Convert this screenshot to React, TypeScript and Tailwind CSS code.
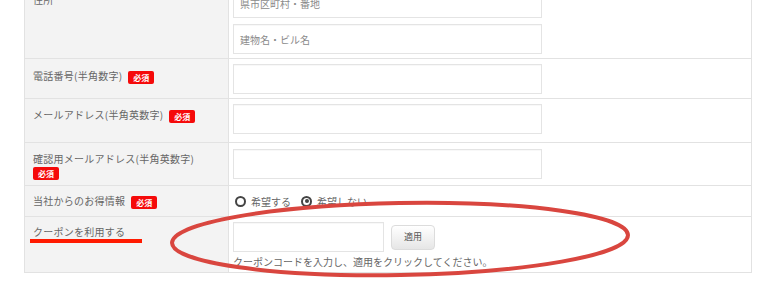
import React from 'react';

/**
 * Order form fragment (address / contact / coupon rows)
 * with a hand-drawn red annotation over the coupon row.
 */

const FONT = { fontFamily: '"Noto Sans CJK JP", "Noto Sans", sans-serif' };

function Required() {
  return (
    <span className="ml-[6px] inline-block rounded-[2px] bg-[#f50a0a] px-[5px] align-middle text-[8px] font-bold leading-[13px] tracking-normal text-white">
      必須
    </span>
  );
}

function TextInput({ placeholder, className = 'w-[309px]' }: { placeholder?: string; className?: string }) {
  return (
    <div
      className={`flex h-[30px] items-center border border-[#e4e4e4] bg-white px-[6px] text-[10px] text-[#8a8a8a] shadow-[inset_0_1px_1px_rgba(0,0,0,0.03)] ${className}`}
    >
      {placeholder}
    </div>
  );
}

function Radio({ checked, label }: { checked?: boolean; label: string }) {
  return (
    <label className="flex items-center gap-[5px] text-[10px] text-[#666]">
      <span className="flex h-[11px] w-[11px] items-center justify-center rounded-full border-2 border-[#444] bg-white">
        {checked && <span className="h-[4px] w-[4px] rounded-full bg-[#444]" />}
      </span>
      {label}
    </label>
  );
}

interface RowProps {
  label: React.ReactNode;
  height: string;
  labelPad?: string;
  valuePad?: string;
  children: React.ReactNode;
}

function Row({ label, height, labelPad = 'pt-[10px]', valuePad = 'pt-[5px]', children }: RowProps) {
  return (
    <div className={`grid grid-cols-[204px_1fr] border-b border-[#e2e2e2] ${height}`}>
      <div
        className={`border-r border-[#e2e2e2] bg-[#f3f3f3] px-[8px] text-[10px] leading-[14px] tracking-[0.25px] text-[#666] ${labelPad}`}
      >
        {label}
      </div>
      <div className={`bg-white pl-[4px] ${valuePad}`}>{children}</div>
    </div>
  );
}

export default function App() {
  return (
    <div className="relative h-[288px] w-[768px] overflow-hidden bg-white" style={FONT}>
      <div className="-mt-[17px] ml-[24px] w-[728px] border-x border-[#e2e2e2]">
        <Row label="住所" height="h-[76px]">
          <div className="flex flex-col gap-[6px]">
            <TextInput placeholder="県市区町村・番地" />
            <TextInput placeholder="建物名・ビル名" />
          </div>
        </Row>

        <Row label={<>電話番号(半角数字)<Required /></>} height="h-[40px]">
          <TextInput />
        </Row>

        <Row label={<>メールアドレス(半角英数字)<Required /></>} height="h-[44px]" labelPad="pt-[9px]">
          <TextInput />
        </Row>

        <Row
          label={
            <>
              <span className="block">確認用メールアドレス(半角英数字)</span>
              <span className="-ml-[6px] block leading-[12px]">
                <Required />
              </span>
            </>
          }
          height="h-[43px]"
          labelPad="pt-[9px]"
          valuePad="pt-[6px]"
        >
          <TextInput />
        </Row>

        <Row label={<>当社からのお得情報<Required /></>} height="h-[31px]" labelPad="pt-[8px]" valuePad="pt-0">
          <div className="flex h-full items-center gap-[10px] pl-[2px]">
            <Radio label="希望する" />
            <Radio checked label="希望しない" />
          </div>
        </Row>

        <Row label="クーポンを利用する" height="h-[56px]" labelPad="pt-[8px]">
          <div className="flex items-center">
            <TextInput className="w-[151px]" />
            <button
              type="button"
              className="ml-[7px] h-[25px] w-[44px] rounded-[4px] border border-[#dcdcdc] bg-gradient-to-b from-white to-[#e6e6e6] text-[9px] text-[#555]"
            >
              適用
            </button>
          </div>
          <p className="mt-[3px] text-[10px] leading-[14px] text-[#666]">
            クーポンコードを入力し、適用をクリックしてください。
          </p>
        </Row>
      </div>

      {/* annotation: underline + ellipse */}
      <svg className="pointer-events-none absolute left-0 top-0" width="768" height="288" viewBox="0 0 768 288">
        <rect x="30" y="239" width="112" height="4" fill="#ff1a00" />
        <ellipse
          cx="400"
          cy="239"
          rx="228"
          ry="36"
          fill="none"
          stroke="#d9463f"
          strokeWidth="4"
          transform="rotate(-1 400 239)"
        />
      </svg>
    </div>
  );
}
